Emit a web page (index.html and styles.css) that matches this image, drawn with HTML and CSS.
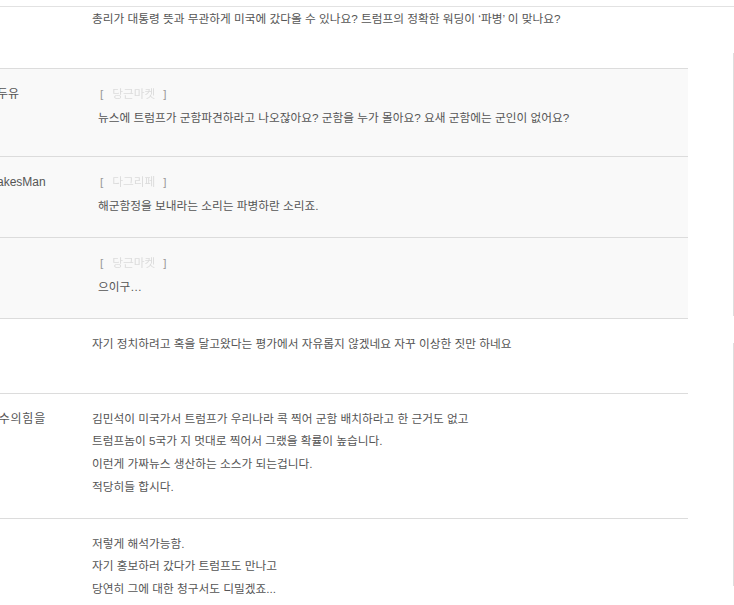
FILE: index.html
```html
<!DOCTYPE html>
<html lang="ko">
<head>
<meta charset="utf-8">
<title>댓글</title>
<link rel="stylesheet" href="styles.css">
</head>
<body>
<div class="topbar"></div>
<div class="page">
  <div class="main">
    <div class="comment first">
      <div class="user">하늘</div>
      <div class="body">
        <p>총리가 대통령 뜻과 무관하게 미국에 갔다올 수 있나요? 트럼프의 정확한 워딩이 ‘파병’ 이 맞나요?</p>
      </div>
    </div>
    <div class="comment reply tall">
      <div class="user">라떼두유</div>
      <div class="body">
        <div class="target">[<span class="blur">당근마켓</span>]</div>
        <p>뉴스에 트럼프가 군함파견하라고 나오잖아요? 군함을 누가 몰아요? 요새 군함에는 군인이 없어요?</p>
      </div>
    </div>
    <div class="comment reply">
      <div class="user">MistakesMan</div>
      <div class="body">
        <div class="target">[<span class="blur">다그리페</span>]</div>
        <p>해군함정을 보내라는 소리는 파병하란 소리죠.</p>
      </div>
    </div>
    <div class="comment reply">
      <div class="user">하루</div>
      <div class="body">
        <div class="target">[<span class="blur">당근마켓</span>]</div>
        <p>으이구…</p>
      </div>
    </div>
    <div class="comment">
      <div class="user">비타</div>
      <div class="body">
        <p>자기 정치하려고 혹을 달고왔다는 평가에서 자유롭지 않겠네요 자꾸 이상한 짓만 하네요</p>
      </div>
    </div>
    <div class="comment">
      <div class="user spaced">국민수의힘을</div>
      <div class="body">
        <p>김민석이 미국가서 트럼프가 우리나라 콕 찍어 군함 배치하라고 한 근거도 없고</p>
        <p>트럼프놈이 5국가 지 멋대로 찍어서 그랬을 확률이 높습니다.</p>
        <p>이런게 가짜뉴스 생산하는 소스가 되는겁니다.</p>
        <p>적당히들 합시다.</p>
      </div>
    </div>
    <div class="comment">
      <div class="user">바다</div>
      <div class="body">
        <p>저렇게 해석가능함.</p>
        <p>자기 홍보하러 갔다가 트럼프도 만나고</p>
        <p>당연히 그에 대한 청구서도 디밀겠죠...</p>
      </div>
    </div>
  </div>
  <aside class="sidebar">
    <div class="side-box first-box"></div>
    <div class="side-box second-box"></div>
  </aside>
</div>
</body>
</html>
```

FILE: styles.css
```css
html, body {
  margin: 0;
  padding: 0;
  background: #fff;
  overflow: hidden;
}
body {
  font-family: "Liberation Sans", "Noto Sans CJK KR", sans-serif;
  color: #555;
}
.topbar {
  height: 6px;
  border-bottom: 1px solid #e2e2e2;
}
.page {
  display: flex;
  align-items: flex-start;
  margin-left: -25px;
}
.main {
  width: 713px;
  flex: none;
}
.comment {
  display: flex;
  border-bottom: 1px solid #dcdcdc;
  padding: 14px 0 19px;
}
.comment.first {
  padding-top: 1px;
}
.comment.tall {
  padding-bottom: 26px;
}
.comment.reply {
  background: #f9f9f9;
}
.user {
  width: 117px;
  flex: none;
  font-size: 12px;
  line-height: 22.7px;
  white-space: nowrap;
  overflow: hidden;
  color: #555;
}
.user.spaced {
  letter-spacing: 0.8px;
}
.body {
  min-height: 41px;
  font-size: 11.7px;
  line-height: 22.7px;
}
.reply .body {
  padding-left: 6px;
}
.body p {
  margin: 0;
}
.target {
  color: #999;
  margin-bottom: 1.5px;
  padding-left: 2px;
}
.blur {
  display: inline-block;
  margin: 0 8px 0 9px;
  color: #dcdcdc;
  filter: blur(0.5px);
}
.sidebar {
  margin-left: 45px;
  margin-top: 46px;
  display: flex;
  flex-direction: column;
  gap: 27px;
}
.side-box {
  width: 220px;
  border-left: 1px solid #dedede;
}
.first-box {
  height: 263px;
}
.second-box {
  height: 243px;
}
```
